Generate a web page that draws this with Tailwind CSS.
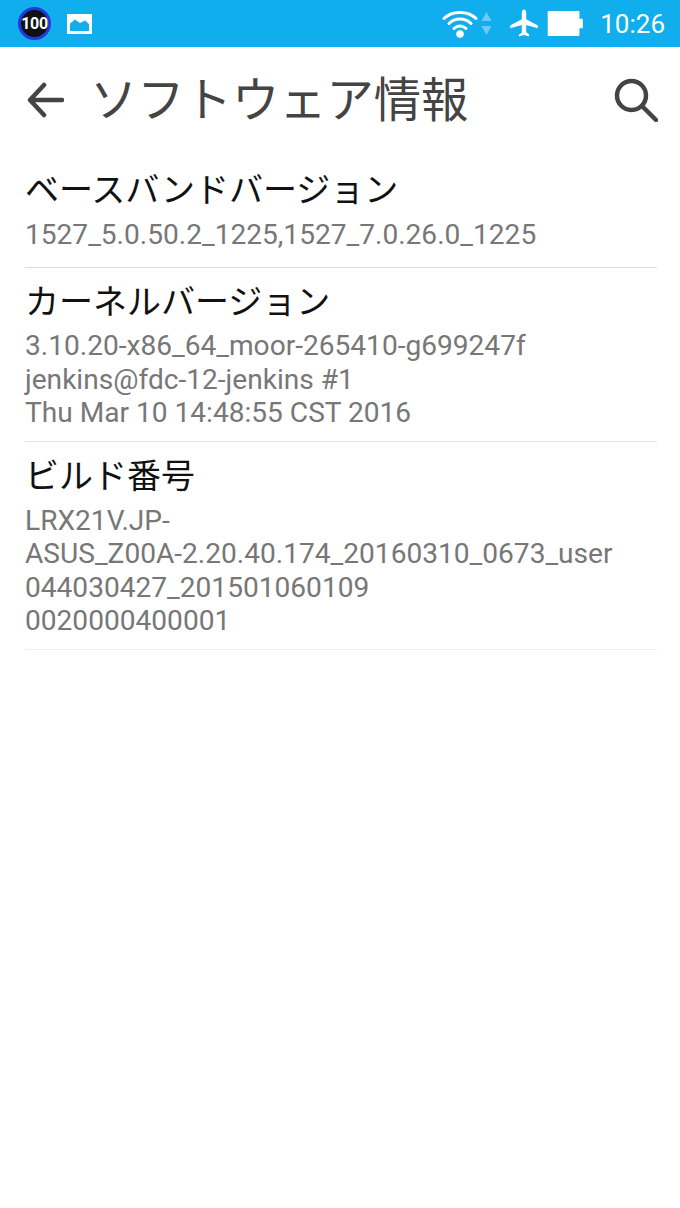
<!DOCTYPE html>
<html lang="ja">
  <head>
    <meta charset="UTF-8" />
    <script src="https://cdn.jsdelivr.net/npm/@tailwindcss/browser@4"></script>
    <title>ソフトウェア情報</title>
  </head>
  <body class="bg-white font-['Roboto','Noto_Sans_CJK_JP',sans-serif]">
    <div class="w-[680px] h-[1208px] overflow-hidden">

      <!-- status bar -->
      <div class="h-[47px] bg-[#10aeec] flex items-center pl-[18px] pr-[15px] text-white">
        <div class="w-[33px] h-[33px] rounded-full bg-[#111] border-[3px] border-[#2438e0] flex items-center justify-center text-[16px] font-bold tracking-[-0.4px]">100</div>
        <svg class="ml-[16px]" width="25" height="20" viewBox="0 0 25 20">
          <path fill="#fff" fill-rule="evenodd" d="M0 0h25v20H0z M3 17h19V10l-4-3.500-5 2.500-5-3.500-5 4z" />
        </svg>
        <div class="flex-1"></div>
        <svg width="36" height="30" viewBox="0 0 36 30" fill="none" stroke="#fff" stroke-width="3" stroke-linecap="round">
          <path d="M2 9.500C10 1.500 26 1.500 34 9.500" />
          <path d="M7 14.500C13 8.500 23 8.500 29 14.500" />
          <path d="M12 19.500C15.500 16 20.500 16 24 19.500" />
          <circle cx="18" cy="25" r="3.800" fill="#fff" stroke="none" />
        </svg>
        <svg class="ml-[3px]" width="11" height="25" viewBox="0 0 11 25">
          <path fill="#6fcbf3" d="M5.500 1L10.500 10H.5z M.5 15h10L5.500 24z" />
        </svg>
        <svg class="ml-[18px]" width="28" height="30" viewBox="0 0 29 30">
          <path fill="#fff" d="M14.500 0c1.300 0 2.300 1.500 2.300 3.500V10l12 6.500v2.800l-12-3.300v7.500l3 2.200V28l-5.300-1.500L9.200 28v-1.800l3-2.200V16l-12 3.300v-2.800l12-6.500V3.500c0-2 1-3.500 2.300-3.500z" />
        </svg>
        <svg class="ml-[9px]" width="37" height="25" viewBox="0 0 37 26">
          <path fill="#fff" d="M1 0h31a1 1 0 0 1 1 1v7h3.500v10H33v7a1 1 0 0 1-1 1H1a1 1 0 0 1-1-1V1a1 1 0 0 1 1-1z" />
        </svg>
        <span class="ml-[16px] text-[26px] leading-none">10:26</span>
      </div>

      <!-- action bar -->
      <div class="h-[106px] flex items-center pl-[27px] pr-[22px] text-[#444]">
        <svg width="37" height="36" viewBox="0 0 37 36" fill="none" stroke="#444" stroke-width="4.500" stroke-linecap="round" stroke-linejoin="round">
          <path d="M35 18H3 M17 3L3 18l14 15" />
        </svg>
        <h1 class="ml-[26px] mt-[4px] text-[47.300px] leading-none font-normal">ソフトウェア情報</h1>
        <div class="flex-1"></div>
        <svg width="44" height="44" viewBox="0 0 44 44" fill="none" stroke="#444" stroke-width="4.500" stroke-linecap="round">
          <circle cx="17.500" cy="17.500" r="14.500" />
          <path d="M28 28l14 14" />
        </svg>
      </div>

      <!-- info rows -->
      <div class="mx-[25px] w-[632px]">
        <div class="h-[115px] border-b border-[#ddd] pt-[15px]">
          <div class="text-[34px] leading-[44px] text-[#111]">ベースバンドバージョン</div>
          <div class="mt-[6px] text-[28.100px] leading-[33px] text-[#777]">1527_5.0.50.2_1225,1527_7.0.26.0_1225</div>
        </div>
        <div class="h-[174px] border-b border-[#e5e5e5] pt-[12px]">
          <div class="text-[34px] leading-[44px] text-[#111]">カーネルバージョン</div>
          <div class="mt-[5px] text-[28.100px] leading-[33.500px] text-[#777]">3.10.20-x86_64_moor-265410-g699247f<br />jenkins@fdc-12-jenkins #1<br />Thu Mar 10 14:48:55 CST 2016</div>
        </div>
        <div class="h-[208px] border-b border-[#eee] pt-[12px]">
          <div class="text-[34px] leading-[44px] text-[#111]">ビルド番号</div>
          <div class="mt-[5.500px] text-[28.100px] leading-[33.500px] text-[#777]">LRX21V.JP-<br />ASUS_Z00A-2.20.40.174_20160310_0673_user<br />044030427_201501060109<br />0020000400001</div>
        </div>
      </div>

    </div>
  </body>
</html>
